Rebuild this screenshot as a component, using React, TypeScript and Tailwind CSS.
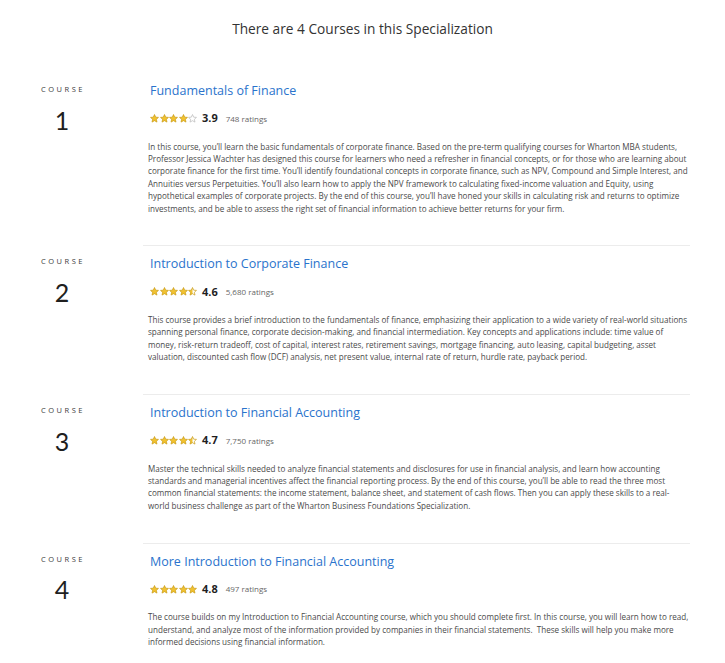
import React from 'react';

type Course = {
  n: number;
  title: string;
  rating: number;
  count: string;
  text: string;
};

const courses: Course[] = [
  {
    n: 1,
    title: 'Fundamentals of Finance',
    rating: 3.9,
    count: '748 ratings',
    text: "In this course, you’ll learn the basic fundamentals of corporate finance. Based on the pre-term qualifying courses for Wharton MBA students, Professor Jessica Wachter has designed this course for learners who need a refresher in financial concepts, or for those who are learning about corporate finance for the first time. You’ll identify foundational concepts in corporate finance, such as NPV, Compound and Simple Interest, and Annuities versus Perpetuities. You’ll also learn how to apply the NPV framework to calculating fixed-income valuation and Equity, using hypothetical examples of corporate projects. By the end of this course, you’ll have honed your skills in calculating risk and returns to optimize investments, and be able to assess the right set of financial information to achieve better returns for your firm.",
  },
  {
    n: 2,
    title: 'Introduction to Corporate Finance',
    rating: 4.6,
    count: '5,680 ratings',
    text: 'This course provides a brief introduction to the fundamentals of finance, emphasizing their application to a wide variety of real-world situations spanning personal finance, corporate decision-making, and financial intermediation. Key concepts and applications include: time value of money, risk-return tradeoff, cost of capital, interest rates, retirement savings, mortgage financing, auto leasing, capital budgeting, asset valuation, discounted cash flow (DCF) analysis, net present value, internal rate of return, hurdle rate, payback period.',
  },
  {
    n: 3,
    title: 'Introduction to Financial Accounting',
    rating: 4.7,
    count: '7,750 ratings',
    text: 'Master the technical skills needed to analyze financial statements and disclosures for use in financial analysis, and learn how accounting standards and managerial incentives affect the financial reporting process. By the end of this course, you’ll be able to read the three most common financial statements: the income statement, balance sheet, and statement of cash flows. Then you can apply these skills to a real-world business challenge as part of the Wharton Business Foundations Specialization.',
  },
  {
    n: 4,
    title: 'More Introduction to Financial Accounting',
    rating: 4.8,
    count: '497 ratings',
    text: 'The course builds on my Introduction to Financial Accounting course, which you should complete first. In this course, you will learn how to read, understand, and analyze most of the information provided by companies in their financial statements.  These skills will help you make more informed decisions using financial information.',
  },
];

const STAR = 'M5 0.6 L6.3 3.5 L9.4 3.8 L7.05 5.9 L7.75 9 L5 7.4 L2.25 9 L2.95 5.9 L0.6 3.8 L3.7 3.5 Z';

// fill: 0 = empty, 0.5 = half, 1 = full
const Star = ({ fill, id }: { fill: number; id: string }) => (
  <svg width="9" height="9" viewBox="0 0 10 10" className="block">
    <defs>
      <clipPath id={id}>
        <rect x="0" y="0" width={10 * fill} height="10" />
      </clipPath>
    </defs>
    {fill > 0 && <path d={STAR} fill="#f2c230" clipPath={`url(#${id})`} />}
    <path d={STAR} fill="none" stroke={fill > 0 ? '#c99a12' : '#b9b9b9'} strokeWidth="0.8" strokeLinejoin="round" />
  </svg>
);

const Stars = ({ rating, n }: { rating: number; n: number }) => {
  const fills = [0, 1, 2, 3, 4].map((i) => {
    const v = rating - i;
    if (v >= 0.75) return 1;
    if (v >= 0.25) return 0.5;
    return 0;
  });
  return (
    <div className="flex items-center gap-[0.5px]">
      {fills.map((f, i) => (
        <Star key={i} fill={f} id={`s${n}-${i}`} />
      ))}
    </div>
  );
};

const CourseRow = ({ c, first }: { c: Course; first: boolean }) => (
  <div className="flex">
    <div className="w-[143px] shrink-0 flex flex-col items-center pr-[19px] pt-[13px]">
      <div className="text-[7.5px] tracking-[2.5px] text-[#3c3c3c] leading-none pl-[2px]">COURSE</div>
      <div className="mt-[14px] text-[25px] leading-none text-[#1f1f1f] font-['Lato',sans-serif]">{c.n}</div>
    </div>
    <div className={`w-[547px] ${first ? '' : 'border-t border-[#ececec]'} pt-[9px] pb-[30.5px] pl-[5px]`}>
      <div className="text-[12.5px] text-[#2a73cc] leading-[17px] pl-[2px]">{c.title}</div>
      <div className="mt-[13.5px] flex items-center pl-[2px] h-[12px]">
        <Stars rating={c.rating} n={c.n} />
        <span className="ml-[5px] text-[11px] font-bold text-[#1f1f1f]">{c.rating}</span>
        <span className="ml-[8px] text-[8px] text-[#666]">{c.count}</span>
      </div>
      <p className="mt-[16px] text-[8.1px] leading-[12.4px] text-[#4a4a4a] whitespace-pre-wrap">{c.text}</p>
    </div>
  </div>
);

export default function App() {
  return (
    <div className="w-[725px] min-h-[663px] bg-white font-['Open_Sans',sans-serif]">
      <h1 className="pt-[19px] text-center text-[13.7px] leading-[20px] text-[#333]">
        There are 4 Courses in this Specialization
      </h1>
      <div className="mt-[34px]">
        {courses.map((c, i) => (
          <CourseRow key={c.n} c={c} first={i === 0} />
        ))}
      </div>
    </div>
  );
}
